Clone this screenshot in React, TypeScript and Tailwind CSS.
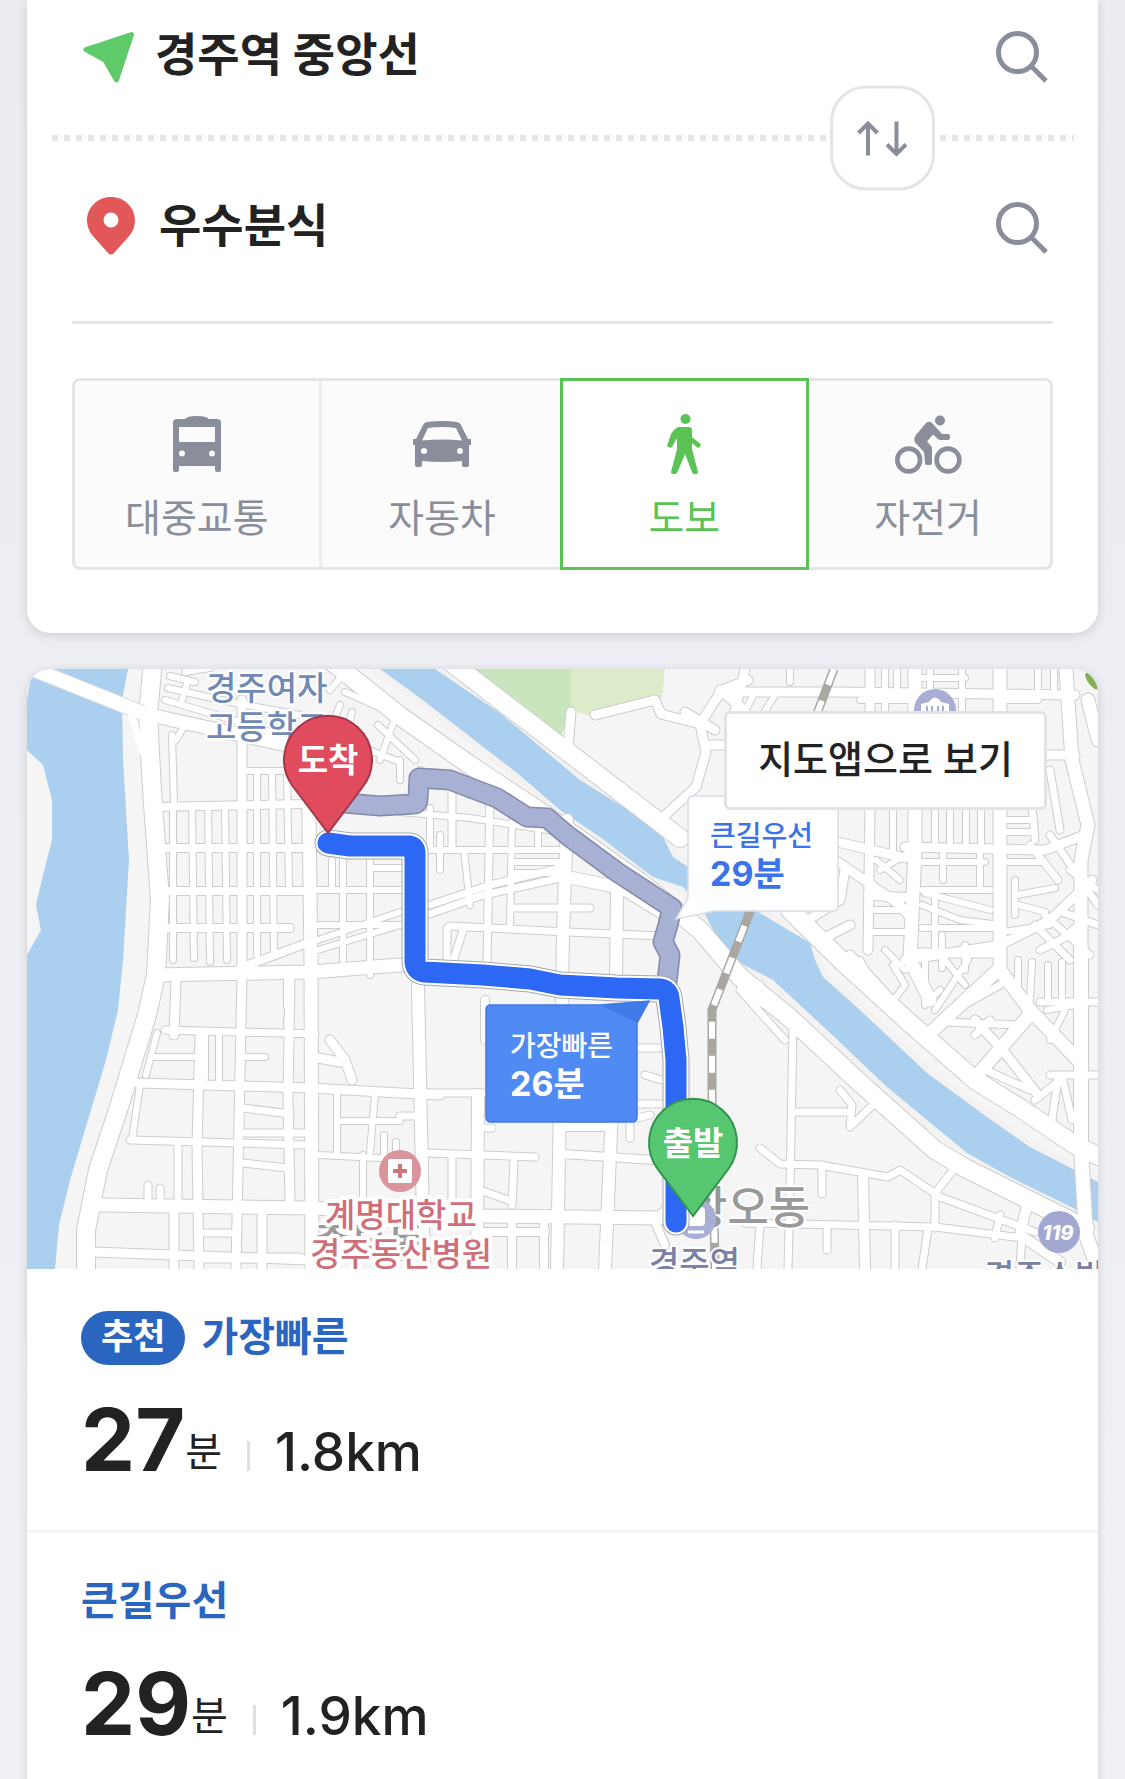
import { useState } from 'react'

type TMode = 'transit' | 'car' | 'walk' | 'bike'

interface IRoad {
  d: string
  w: number
}

interface IRoute {
  id: string
  title: string
  minutes: number
  distance: string
  recommended?: boolean
}

const routes: IRoute[] = [
  { id: 'fastest', title: '가장빠른', minutes: 27, distance: '1.8km', recommended: true },
  { id: 'main-road', title: '큰길우선', minutes: 29, distance: '1.9km' },
]

// narrow streets first, wide ones are painted over them
const roads: IRoad[] = [
  // west blocks
  { w: 6, d: 'M173 805V960M192 805L194 958M208 805L210 962M225 805L227 960M257 772V955M272 772L274 955M287 772L289 890' },
  { w: 6, d: 'M165 700L240 722L300 742M170 676L195 682M168 688L230 702L300 715M176 740L182 730M185 672L210 668M182 700L188 680' },
  { w: 6, d: 'M172 735L174 803M243 771H306M332 860V890M343 855V960M370 850V975M372 868H402M318 940L400 912M318 950L400 925M312 890H402M318 925H402' },
  { w: 8, d: 'M155 807L306 804M158 848H306M160 891H306M162 928H290M240 968L310 942' },
  { w: 6, d: 'M330 690L345 672M345 692L400 716M340 705L330 730M372 700L420 735M395 718L380 760M330 735L400 762M352 712L345 742M378 725L415 760M400 760V780' },
  { w: 6, d: 'M155 1057H197M157 1033L146 1075M205 1035V1078M219 1035V1080M245 1057H265M287 975V1006M287 1020V1025M140 1085L132 1140' },
  { w: 7, d: 'M165 1030L315 1034M243 1108L290 1114M243 1133H305M243 1163L287 1168M130 1140L305 1145M178 1145V1205M148 1205V1185M160 1205V1188M203 1233H232' },
  { w: 9, d: 'M242 700V972M176 980L174 1035M200 1035L197 1145L199 1269M242 975L236 1269M290 975L288 1100L290 1200M174 1205V1269M262 1210V1269M203 1258H300' },
  { w: 9, d: 'M138 1083L310 1088L400 1093L440 1095M93 1252L310 1260M330 1040L345 1060L352 1080M318 1058L340 1062' },
  { w: 6, d: 'M337 1092V1152M375 1094L370 1152M337 1121H400M363 1155V1205M318 1155L420 1160M384 1135V1155M396 1142V1150' },
  // centre blocks
  { w: 6, d: 'M430 850H560M440 835V870M464 850L470 905M512 822L510 925M538 822V850M516 862H560M516 873H560M400 812L470 818L560 832M420 770L470 795M430 808V850' },
  { w: 7, d: 'M430 914L480 896L560 878M430 905L490 885L560 868M452 790V850M490 795L487 965M513 908H590M450 926L567 932L662 936M447 928V965M463 930L452 965' },
  { w: 7, d: 'M400 1093H485M400 1116H418M425 1153L535 1157M480 1190L508 1200M452 1155V1208M514 1160L512 1205M480 1128H492M637 1048H662M645 1075L662 1080M637 1104H665M630 1138V1120L650 1115' },
  { w: 8, d: 'M485 1000V1040M560 1127H612M562 1154L655 1160M512 1222V1269M544 1222V1269M480 1232H545M615 960V985M655 1222L665 1245' },
  { w: 12, d: 'M567 820L563 935L557 1269M617 888L616 985M612 1110L605 1269M567 877L622 888L664 914M418 985L424 1269M478 1095L477 1269' },
  // south east of the station
  { w: 7, d: 'M760 1148L780 1164L820 1165L888 1177L900 1170L940 1197L1035 1232M793 1025L790 1190L788 1269M822 1165V1194M827 1225V1250M895 1225V1269M928 1228L922 1269M760 1225L757 1269M1022 1235L1020 1269M1000 1215L995 1238' },
  { w: 7, d: 'M745 1223L935 1227L1022 1238M795 1112H850M840 1090L852 1105L850 1127L876 1102M935 1192V1228M957 1165L936 1192M740 990L785 1040M742 992L788 1018M760 985L745 995' },
  { w: 10, d: 'M863 1175L865 1269M1027 1205L1020 1235L1060 1262' },
  // north east blocks
  { w: 6, d: 'M885 669V710M897 669V690M930 669V711M948 692V711M962 669V711M1038 669V690M1054 669V692M915 678H965M860 700H910M1000 700H1038M755 692L745 711M775 695L765 711M790 669V682' },
  { w: 6, d: 'M893 812V850M935 812V845M950 812V845M966 812V845M981 812V845M1003 820H1030M1003 832H1030M1000 862H1040M922 862H985M943 850V880M980 850V885M922 890H990M880 870L910 852M876 860L900 880' },
  { w: 6, d: 'M925 893L990 910M922 905L960 920L992 924M935 895V950M922 928H992M942 935V968M965 945V970M1015 880V915M1017 895L1055 888M1018 905L1045 912M1003 932L1050 925M870 910H907M870 932H907M885 950L905 970' },
  { w: 6, d: 'M860 960L880 995M893 965L905 985L890 1005M925 960V1005L940 990M945 960L965 985M968 960L935 1010M1018 960V995M1032 962L1030 1000M1048 965V1000M1062 962V1000M1047 1010L1075 1005M1065 1010L1050 1040' },
  { w: 7, d: 'M945 1022L1020 1025M955 1010L1000 985M990 1020L975 1035M1050 1075H1098M1075 1002H1098M1040 1002H1075M1058 1078L1052 1120M1063 1080L1072 1120M1035 1100L1060 1080M990 1072L1030 1090' },
  { w: 7, d: 'M1030 845L1058 880M1050 835L1098 905M1062 912L1098 925M1035 925L1070 960M1045 915L1090 955M1060 940L1085 920M1040 950L1080 930M1030 780L1035 840M1050 770L1060 830M1070 870L1098 890' },
  { w: 9, d: 'M595 715L655 700L661 714L700 724L722 690L748 680M700 724L706 752L696 787L663 817M685 712L715 730M706 745H725M720 690L745 711M571 712L568 748' },
  { w: 9, d: 'M720 692H835L1075 695M1046 755H1075M870 669V711M870 810L868 950M838 842L905 858M838 862L900 905L912 920M905 847L1045 850L1085 835M868 895L912 898M905 960L1000 945L1050 920L1092 880M910 953H1000' },
  { w: 9, d: 'M800 925L840 900L845 870M820 940L850 925M850 955L900 1010M975 1020L1005 1053L1038 1095M745 669L735 711' },
  { w: 13, d: 'M915 669V850L910 960L930 1000M1000 669V970L1030 1010L1080 1062M928 1035L1000 968M1032 1012L980 1072M1066 669L1072 760L1088 825L1081 860V960M1088 700L1098 740' },
  // arterials
  { w: 13, d: 'M308 745L311 960L312 1269M155 975L310 972L400 965M100 1205L310 1208L480 1216L660 1218L690 1190M150 715L300 748L325 745' },
  { w: 18, d: 'M153 660L148 715L152 790L160 900L156 975L147 1015L118 1110L98 1170L86 1230V1275' },
  { w: 18, d: 'M330 660L400 716L470 765L545 815L640 882L700 930L740 977L790 1018L860 1083L935 1150L965 1168L1085 1228' },
  { w: 18, d: 'M448 660L560 746L680 838M790 910L843 962L912 1025L975 1080L1020 1108L1075 1145L1098 1156' },
  { w: 14, d: 'M1081 950V1150L1086 1235L1098 1269' },
]

const riverside = 'M700 905L683 887L653 877L600 837L560 810L517 773L420 698L380 669H435L500 713L580 780L633 813L663 837L673 857L700 875L760 913L810 943L815 960L823 977L860 1010L927 1073L987 1117L1030 1147L1098 1182V1222L1075 1209L1010 1177L967 1153L927 1120L887 1087L827 1030L787 993L773 980L740 963L720 943Z'
const westRiver = 'M32 669H128L122 700L123 760L129 860L123 960L118 1010L106 1060L88 1120L70 1180L59 1225L55 1269H27V955L41 930L36 905L43 875L52 840V800L43 765L27 750V700Z'
const mainRoadRoute = 'M345 803L380 806L414 804Q418 804 418 798L419 778L450 780L497 798L527 817L547 818L567 835L617 872L672 908L668 925L663 942L670 955L667 982'
const fastestRoute = 'M328 843L350 846H410Q415 847 415 853V962Q416 971 424 972L483 975L530 979L560 985L617 988L660 989Q668 990 669 998L673 1027L676 1060V1222'
const railway = 'M834 669L818 711L748 917L712 1010V1093L715 1269'

function NavigationIcon() {
  return (
    <svg width="52" height="52" viewBox="0 0 52 52" fill="#5fca69" stroke="#5fca69" strokeWidth="5" strokeLinejoin="round">
      <path d="M3 18.500L48.500 3.500L33.500 49L22 29Z" />
    </svg>
  )
}

function PinIcon() {
  return (
    <svg className="mb-1" width="48" height="58" viewBox="0 0 48 58" fill="#e25858">
      <path fillRule="evenodd" d="M24 0C10.500 0 0 10.500 0 23.500C0 29 2 34 5 38L21 56Q24 59 27 56L43 38C46 34 48 29 48 23.500C48 10.500 37.500 0 24 0ZM24 15.500A7.500 7.500 0 1 1 24 30.500A7.500 7.500 0 1 1 24 15.500Z" />
    </svg>
  )
}

function SearchIcon() {
  return (
    <svg width="54" height="54" viewBox="0 0 54 54" fill="none" stroke="#8a8e9b" strokeWidth="5">
      <circle cx="22.500" cy="22.500" r="19" />
      <path d="M36.500 36.500L51 51" />
    </svg>
  )
}

function SwapIcon() {
  return (
    <svg width="50" height="36" viewBox="0 0 50 36" fill="none" stroke="#8a8e9b" strokeWidth="4">
      <path d="M11 35V3M1.500 12.500L11 3L20.500 12.500M39.500 1V33M30 24L39.500 33.500L49 24" />
    </svg>
  )
}

function BusIcon() {
  return (
    <svg width="48" height="56" viewBox="0 0 48 56" fill="currentColor">
      <path fillRule="evenodd" d="M4 3H12Q14 0 24 0T36 3H44Q48 3 48 7V54Q48 56 46 56H44Q42 56 42 54V50H6V54Q6 56 4 56H2Q0 56 0 54V7Q0 3 4 3ZM6 11V26H42V11ZM9 34.500A3 3 0 1 0 9 40.500A3 3 0 1 0 9 34.500ZM39 34.500A3 3 0 1 0 39 40.500A3 3 0 1 0 39 34.500Z" />
    </svg>
  )
}

function CarIcon() {
  return (
    <svg width="58" height="46" viewBox="0 0 58 46" fill="currentColor">
      <path fillRule="evenodd" d="M10 4Q11 1.500 14 1Q29 -1 44 1Q47 1.500 48 4L55 18H58V24H56V44Q56 46 54 46H51Q49 46 49 44V40Q29 42 9 40V44Q9 46 7 46H4Q2 46 2 44V24H0V18H3ZM15 7L9 19.500Q29 17.500 49 19.500L43 7Q29 5 15 7ZM11 27A3 3 0 1 0 11 33A3 3 0 1 0 11 27ZM47 27A3 3 0 1 0 47 33A3 3 0 1 0 47 27Z" />
    </svg>
  )
}

function WalkIcon() {
  return (
    <svg width="34" height="60" viewBox="0 0 34 60" fill="currentColor">
      <circle cx="18.500" cy="5" r="5" />
      <path d="M11 13H22Q25 13 25 16V23L33.500 30Q35 32 31 34L25 29V35L31 58Q31 60 29 60H27Q25.500 60 25 58L18 40L10.500 58Q10 60 8 60H6Q4 60 4 58L10 35V24L5 33Q3 35 0 32L4 20Q7 15 11 13Z" />
    </svg>
  )
}

function BikeIcon() {
  return (
    <svg width="67" height="59" viewBox="0 0 67 59" fill="currentColor">
      <circle cx="45" cy="5.500" r="5" />
      <path d="M31 8Q34 5.500 37 8L47 19H53Q55 19 55 22T53 25H45Q44 25 43 24L38 19.500L32 26.500L36 31Q37 32 37 34V48Q37 50 35 50H32Q30 50 30 48L29 37L20.500 28Q18 24.500 20.500 20.500Z" />
      <g fill="none" stroke="currentColor" strokeWidth="4.600">
        <circle cx="13.700" cy="45" r="11.400" />
        <circle cx="53" cy="45" r="11.400" />
      </g>
    </svg>
  )
}

const modes = [
  { id: 'transit', label: '대중교통', Icon: BusIcon },
  { id: 'car', label: '자동차', Icon: CarIcon },
  { id: 'walk', label: '도보', Icon: WalkIcon },
  { id: 'bike', label: '자전거', Icon: BikeIcon },
] as const

function MapPin({ x, y, label, fill, stroke }: { x: number; y: number; label: string; fill: string; stroke: string }) {
  return (
    <g transform={`translate(${x} ${y})`}>
      <path d="M0 73L-35 26.500A44 44 0 1 1 35 26.500Z" fill={fill} stroke={stroke} strokeWidth="2" />
      <text y="12" textAnchor="middle" fill="#fff" fontSize="33" fontWeight="700">{label}</text>
    </g>
  )
}

function RouteMap() {
  return (
    <svg
      className="block h-[600px] w-full"
      viewBox="27 669 1071 600"
      preserveAspectRatio="xMidYMid slice"
      fontFamily="Inter, 'Noto Sans CJK KR', sans-serif"
      role="img"
      aria-label="도보 경로 지도"
    >
      <rect x="27" y="669" width="1071" height="600" fill="#f5f5f5" />
      <path d="M467 669H571V710L560 738Z" fill="#c9e5be" />
      <path d="M571 669H665L662 698L590 716L571 710Z" fill="#dcebca" />
      <path d={westRiver} fill="#abcfee" />
      <path d={riverside} fill="#abcfee" stroke="#f4f2f1" strokeWidth="12" paintOrder="stroke" />
      <g fill="none" strokeLinejoin="round" strokeLinecap="round">
        {roads.map(({ d, w }) => (
          <path key={d} d={d} stroke="#cdcdcd" strokeWidth={w + 2} />
        ))}
        {roads.map(({ d, w }) => (
          <path key={d} d={d} stroke="#fff" strokeWidth={w} />
        ))}
        <path d="M20 664L140 712" stroke="#d8dde2" strokeWidth="16" />
        <path d="M20 664L145 714" stroke="#fff" strokeWidth="14" />
        <path d="M130 710L142 750L150 765" stroke="#fff" strokeWidth="7" />
      </g>
      <g fill="none">
        <path d={railway} stroke="#aaa6a2" strokeWidth="9" />
        <path d={railway} stroke="#fff" strokeWidth="6" strokeDasharray="17 17" />
      </g>

      <ellipse cx="1092" cy="681" rx="4" ry="10" fill="#84ae55" transform="rotate(-36 1092 681)" />

      {/* places */}
      <circle cx="935" cy="710" r="21" fill="#a9aed5" />
      <path d="M921 714V704L929 702Q935 693 941 702L949 704V714Z" fill="#fff" />
      <path d="M927 706V714M932 706V714M938 706V714M943 706V714" stroke="#a9aed5" strokeWidth="2" />
      <circle cx="400" cy="1171" r="21" fill="#d9959b" />
      <rect x="388" y="1159" width="24" height="24" rx="2" fill="#fff" />
      <path d="M400 1164V1178M393 1171H407" stroke="#d0747c" strokeWidth="4" />
      <circle cx="1059" cy="1232" r="21" fill="#a3a8d3" />
      <text x="1058" y="1240" textAnchor="middle" fill="#fff" fontSize="20" fontWeight="800" fontStyle="italic">119</text>
      <g stroke="#fff" strokeWidth="4" paintOrder="stroke" strokeLinejoin="round">
        <g fontSize="33" fill="#7089b5" fontWeight="500">
          <text x="206" y="700">경주여자</text>
          <text x="206" y="739">고등학교</text>
        </g>
        <g fontSize="45" fill="#999" fontWeight="500">
          <text x="314" y="1257" fontSize="40">중부동</text>
          <text x="686" y="1224">황오동</text>
        </g>
        <g fontSize="33" fill="#cf6f79" fontWeight="500" strokeWidth="8">
          <text x="325" y="1227">계명대학교</text>
          <text x="310" y="1266">경주동산병원</text>
        </g>
        <g fontSize="33" fill="#7a80a6" fontWeight="500">
          <text x="649" y="1275">경주역</text>
          <text x="984" y="1288">경주소방서</text>
        </g>
      </g>
      {/* station marker, partly under the departure pin */}
      <circle cx="696" cy="1219" r="20" fill="#a9aed5" />
      <rect x="687" y="1207" width="18" height="19" rx="4" fill="#fff" />
      <path d="M688 1232H704" stroke="#fff" strokeWidth="3" />

      {/* routes */}
      <g fill="none" strokeLinejoin="round" strokeLinecap="round">
        <path d={mainRoadRoute} stroke="#8289a9" strokeWidth="21" />
        <path d={mainRoadRoute} stroke="#a8b0d4" strokeWidth="18" />
        <path d={fastestRoute} stroke="#a4a8ad" strokeWidth="27" />
        <path d={fastestRoute} stroke="#fff" strokeWidth="25" />
        <path d={fastestRoute} stroke="#2c68f4" strokeWidth="21" />
      </g>

      <path d="M693 796H833Q838 796 838 801V906Q838 911 833 911H715L676 919L688 898V801Q688 796 693 796Z" fill="#fff" fillOpacity="0.96" stroke="#d9dde6" strokeWidth="1.500" />
      <g fill="#3a73ea">
        <text x="710" y="846" fontSize="28" fontWeight="500">큰길우선</text>
        <text x="710" y="886" fontSize="34" fontWeight="700">29분</text>
      </g>
      <path d="M491 1005H600L649 1001L637 1023V1117Q637 1122 632 1122H491Q486 1122 486 1117V1010Q486 1005 491 1005Z" fill="#4f8bf3" stroke="#3f78e6" strokeWidth="1.500" />
      <path d="M600 1005L649 1001L637 1023Z" fill="#417be8" />
      <g fill="#fff">
        <text x="510" y="1056" fontSize="28" fontWeight="500">가장빠른</text>
        <text x="510" y="1096" fontSize="34" fontWeight="700">26분</text>
      </g>

      <MapPin x={328} y={760} label="도착" fill="#e04b5e" stroke="#a3384d" />
      <MapPin x={693} y={1143} label="출발" fill="#56c670" stroke="#33924f" />
    </svg>
  )
}

function RouteItem({ route }: { route: IRoute }) {
  return (
    <li className="border-b-3 border-[#f1f3f5] last:border-b-0">
      <a href={`#${route.id}`} className="block px-[54px] pt-[42px] pb-10">
        <div className="flex h-[54px] items-center gap-4">
          {route.recommended && (
            <span className="flex h-[54px] items-center rounded-full bg-[#2a66bf] px-5 pb-1 text-[35px] leading-none font-bold text-white">추천</span>
          )}
          <strong className="pb-0.5 text-[40px] leading-none font-bold text-[#2a66bf]">{route.title}</strong>
        </div>
        <div className="mt-[25px] flex items-baseline text-[#222]">
          <strong className="text-[86px] leading-[100px] font-bold">{route.minutes}</strong>
          <span className="mb-[18px] self-end text-[40px] leading-none">분</span>
          <span className="mx-[25px] h-[30px] w-[3px] bg-[#dfdfdf]" />
          <span className="text-[53px] leading-none font-medium">{route.distance}</span>
        </div>
      </a>
    </li>
  )
}

export default function App() {
  const [mode, setMode] = useState<TMode>('walk')
  const [start, setStart] = useState('경주역 중앙선')
  const [goal, setGoal] = useState('우수분식')

  const handleSwap = () => {
    setStart(goal)
    setGoal(start)
  }

  return (
    <main className="bg-gradient-to-b from-[#ebecf1] to-[#f0f1f6] px-[27px] font-[Inter,'Noto_Sans_CJK_KR',sans-serif] text-[#222]">
      <form className="rounded-b-3xl bg-white pb-[63px] shadow-[0_2px_10px_rgba(0,0,0,0.14)]" onSubmit={(e) => e.preventDefault()}>
        <div className="flex h-[135px] items-center pr-[49px] pb-[21px] pl-14">
          <NavigationIcon />
          <input
            className="ml-5 min-w-0 flex-1 bg-transparent pb-1.5 text-[46px] font-bold outline-none"
            aria-label="출발지"
            value={start}
            onChange={(e) => setStart(e.target.value)}
          />
          <button type="submit" aria-label="출발지 검색"><SearchIcon /></button>
        </div>
        <div className="relative mr-6 ml-[25px] h-1.5 bg-[repeating-linear-gradient(90deg,#e4e5e7_0_6px,transparent_6px_12px)]">
          <button
            type="button"
            aria-label="출발지 도착지 바꾸기"
            className="absolute top-1/2 right-[139px] flex size-[105px] -translate-y-1/2 items-center justify-center rounded-[36px] border-3 border-[#e4e5e7] bg-white pr-0.5"
            onClick={handleSwap}
          >
            <SwapIcon />
          </button>
        </div>
        <div className="mx-[45px] flex h-[183px] items-center border-b-3 border-[#e4e5e7] pr-1 pb-1.5 pl-[15px]">
          <PinIcon />
          <input
            className="ml-6 min-w-0 flex-1 bg-transparent pb-1.5 text-[46px] font-bold outline-none"
            aria-label="도착지"
            value={goal}
            onChange={(e) => setGoal(e.target.value)}
          />
          <button type="submit" aria-label="도착지 검색"><SearchIcon /></button>
        </div>
        <div className="mx-[45px] mt-[54px] grid h-48 grid-cols-4 rounded-lg border-3 border-[#e4e5e7] bg-[#fbfbfb]">
          {modes.map(({ id, label, Icon }) => (
            <button
              key={id}
              type="button"
              aria-pressed={mode === id}
              className={
                mode === id
                  ? '-m-[3px] flex flex-col items-center border-3 border-[#5bc355] bg-white pt-[33px] text-[#5bc355]'
                  : 'flex flex-col items-center pt-[33px] text-[#8a8e9b] nth-2:border-l-3 nth-2:border-[#eaedf1]'
              }
              onClick={() => setMode(id)}
            >
              <span className="flex h-[60px] items-center"><Icon /></span>
              <span className="mt-5 text-[39px] leading-[48px]">{label}</span>
            </button>
          ))}
        </div>
      </form>

      <section className="mt-9 rounded-t-3xl bg-white shadow-[0_2px_10px_rgba(0,0,0,0.14)]">
        <div className="relative overflow-hidden rounded-t-3xl">
          <RouteMap />
          <a
            href="#map"
            className="absolute top-[42px] right-[51px] flex h-[99px] items-center rounded-md border-3 border-[#e2e3e5] bg-white px-[31px] pb-1 text-[38px] leading-none font-medium"
          >
            지도앱으로 보기
          </a>
        </div>
        <ul>
          {routes.map((route) => (
            <RouteItem key={route.id} route={route} />
          ))}
        </ul>
      </section>
    </main>
  )
}
